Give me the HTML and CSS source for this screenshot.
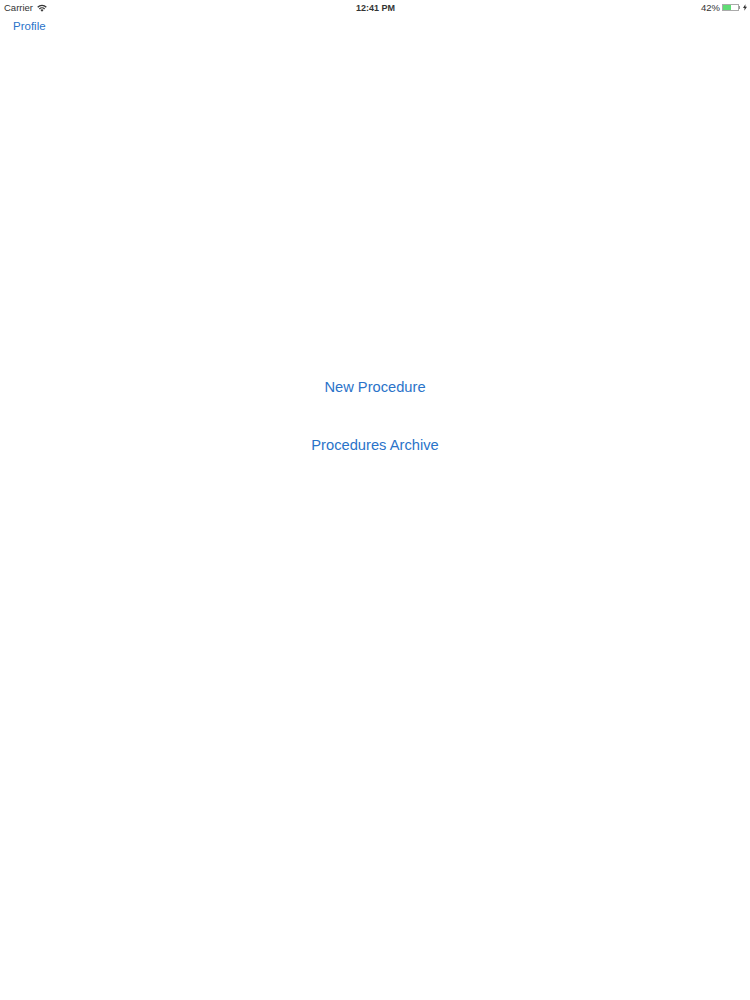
FILE: index.html
```html
<!DOCTYPE html>
<html lang="en">
<head>
    <meta charset="UTF-8">
    <title>Home</title>
    <link rel="stylesheet" href="styles.css">
</head>
<body>
    <div class="status-bar">
        <div class="status-left">
            <span>Carrier</span>
            <svg class="wifi" viewBox="0 0 12 9" width="10" height="8">
                <path d="M0.3 3 A8 8 0 0 1 11.7 3 L10.6 4.2 A6.4 6.4 0 0 0 1.4 4.2 Z" fill="#333"/>
                <path d="M2.3 5 A5.2 5.2 0 0 1 9.7 5 L8.6 6.2 A3.6 3.6 0 0 0 3.4 6.2 Z" fill="#333"/>
                <path d="M4.2 7 A2.6 2.6 0 0 1 7.8 7 L6 9 Z" fill="#333"/>
            </svg>
        </div>
        <div class="status-time">12:41 PM</div>
        <div class="status-right">
            <span>42%</span>
            <div class="battery"><div class="battery-level"></div></div>
            <div class="battery-tip"></div>
            <svg class="bolt" viewBox="0 0 5 8" width="4" height="7">
                <path d="M3 0 L0 4.5 H2 L1.6 8 L5 3.2 H3 Z" fill="#333"/>
            </svg>
        </div>
    </div>
    <div class="nav-bar">
        <a class="nav-link">Profile</a>
    </div>
    <div class="menu">
        <a class="menu-link">New Procedure</a>
        <a class="menu-link">Procedures Archive</a>
    </div>
</body>
</html>
```
FILE: styles.css
```css
html, body { margin: 0; padding: 0; width: 100%; height: 100%; background-color: #fff; font-family: "Liberation Sans", Arial, sans-serif; }
body { overflow: hidden; }
.status-bar { display: grid; grid-template-columns: 1fr auto 1fr; align-items: center; height: 15px; padding: 0 3px 0 4px; font-size: 9.5px; color: #333; }
.status-left { display: flex; align-items: center; gap: 4px; }
.status-time { font-size: 9px; font-weight: bold; }
.status-right { display: flex; align-items: center; justify-content: flex-end; }
.status-right span { margin-right: 2px; }
.battery { box-sizing: border-box; width: 17px; height: 7px; border: 1px solid #aaa; }
.battery-level { width: 55%; height: 100%; background-color: #5fdc74; }
.battery-tip { width: 1px; height: 3px; background-color: #999; margin-right: 3px; }
.nav-bar { display: flex; align-items: center; height: 22px; padding-left: 13px; }
.nav-link { font-size: 11.5px; color: #2a73c9; }
.menu { display: flex; flex-direction: column; align-items: center; gap: 40px; padding-top: 341px; }
.menu-link { font-size: 14.7px; line-height: 18px; color: #2a73c9; }
```
